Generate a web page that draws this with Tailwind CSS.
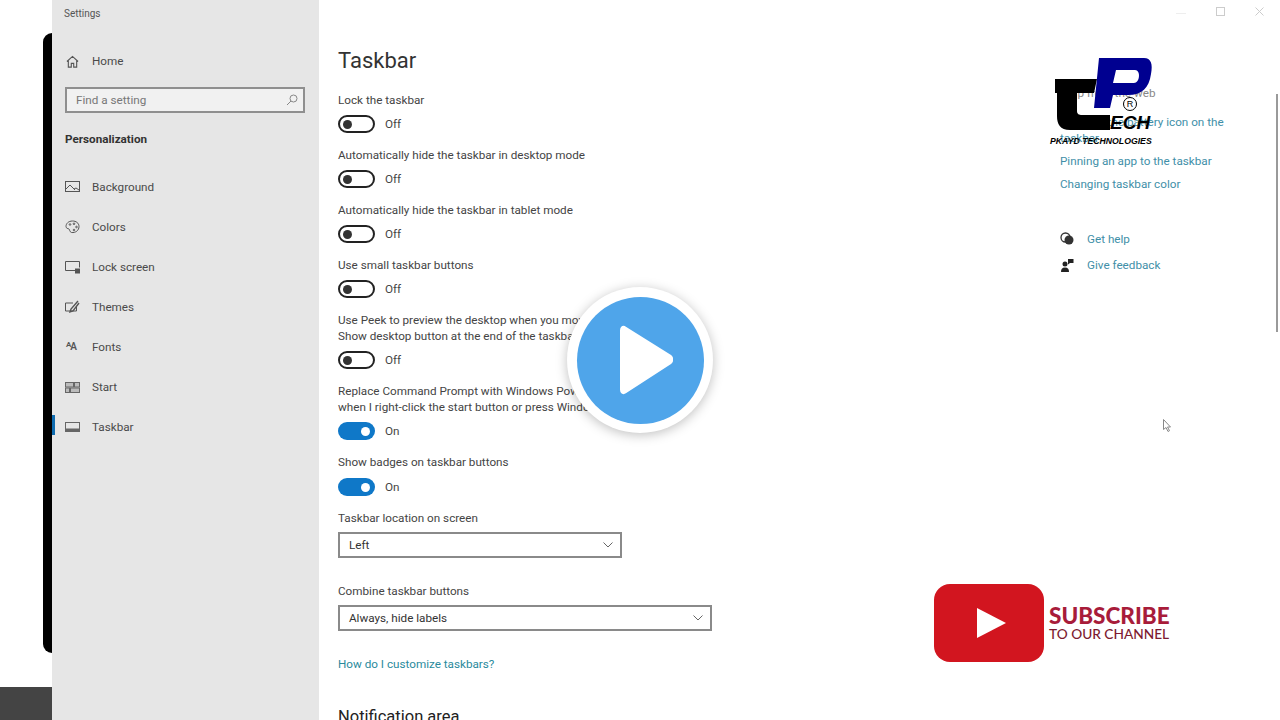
<!DOCTYPE html>
<html lang="en">
<head>
    <meta charset="UTF-8">
    <title>Settings - Taskbar</title>
    <script src="https://cdn.jsdelivr.net/npm/@tailwindcss/browser@4"></script>
</head>
<body class="bg-white">
<div class="relative w-[1280px] h-[720px] overflow-hidden flex font-['Roboto',sans-serif] text-[11.7px] leading-[16px] text-[#444]">

    <!-- Left edge: phone frame and dark block -->
    <div class="w-[52px] shrink-0 flex flex-col items-end bg-white">
        <div class="mt-[33px] w-[9px] h-[620px] bg-black rounded-l-[9px]"></div>
        <div class="mt-[34px] w-full flex-1 bg-[#444]"></div>
    </div>

    <!-- Sidebar -->
    <aside class="w-[267px] shrink-0 bg-[#e6e6e6] flex flex-col text-[#4a4a4a]">
        <div class="pl-[12px] pt-[6px] text-[10px] text-[#555]">Settings</div>
        <div class="pl-[14px] mt-[31px] h-[16px] flex items-center">
            <svg class="w-[13px] h-[13px]" viewBox="0 0 14 14" fill="none" stroke="#555" stroke-width="1.2"><path d="M1 7 7 1.5 13 7M2.5 6v7h3.2V9h2.600v4h3.200V6"/></svg>
            <span class="ml-[13px]">Home</span>
        </div>
        <div class="ml-[13px] mt-[18px] w-[240px] h-[26px] border-2 border-[#8f8f8f] bg-[#f1f1f1] flex items-center justify-between pl-[9px] pr-[5px] text-[#777]">
            <span>Find a setting</span>
            <svg class="w-[12px] h-[12px]" viewBox="0 0 12 12" fill="none" stroke="#888" stroke-width="1"><circle cx="7.5" cy="4.5" r="3.5"/><path d="M5 7 1 11"/></svg>
        </div>
        <div class="ml-[13px] mt-[18px] font-bold text-[#333]">Personalization</div>

        <nav class="mt-[32px] flex flex-col gap-[24px]">
            <div class="h-[16px] flex items-center pl-[13px]">
                <svg class="w-[15px] h-[12px]" viewBox="0 0 15 12" fill="none" stroke="#555"><rect x=".5" y=".5" width="14" height="10"/><path d="m1 8 4-4 5 5M9 8l2-1 3 2"/></svg>
                <span class="ml-[12px]">Background</span>
            </div>
            <div class="h-[16px] flex items-center pl-[13px]">
                <svg class="w-[15px] h-[14px]" viewBox="0 0 15 14" fill="none" stroke="#555"><path d="M7.5 1C3.5 1 1 3.5 1 6.5c0 2 2 2 3 2.500s0 2.500 2.500 3.500c4 .5 7.500-2 7.500-6C14 3 11 1 7.500 1Z"/><circle cx="5" cy="4.500" r=".8"/><circle cx="9" cy="3.800" r=".8"/><circle cx="11.500" cy="7" r=".8"/><circle cx="9" cy="10" r=".8"/></svg>
                <span class="ml-[12px]">Colors</span>
            </div>
            <div class="h-[16px] flex items-center pl-[13px]">
                <svg class="w-[15px] h-[13px]" viewBox="0 0 15 13" fill="none" stroke="#555"><path d="M10 9.500H.5V.5h14v6"/><rect x="10.500" y="8" width="4" height="4" fill="#555"/></svg>
                <span class="ml-[12px]">Lock screen</span>
            </div>
            <div class="h-[16px] flex items-center pl-[13px]">
                <svg class="w-[15px] h-[14px]" viewBox="0 0 15 14" fill="none" stroke="#555"><path d="M8 3H.5v8h11V6"/><path d="M13 1 6 9l-1 3 3-1 6-8" stroke-width="1.400"/></svg>
                <span class="ml-[12px]">Themes</span>
            </div>
            <div class="h-[16px] flex items-center pl-[14px]">
                <span class="w-[14px] text-[#555] font-semibold leading-none tracking-[-1px]"><span class="text-[8px] align-[3px]">A</span><span class="text-[10px]">A</span></span>
                <span class="ml-[12px]">Fonts</span>
            </div>
            <div class="h-[16px] flex items-center pl-[13px]">
                <svg class="w-[15px] h-[11px]" viewBox="0 0 15 11" fill="#bbb" stroke="#666"><rect x=".5" y=".5" width="8" height="4.500"/><rect x="9.500" y=".5" width="5" height="4.500"/><rect x=".5" y="6" width="4" height="4.500"/><rect x="5.500" y="6" width="9" height="4.500"/></svg>
                <span class="ml-[12px]">Start</span>
            </div>
            <div class="relative h-[16px] flex items-center pl-[13px]">
                <div class="absolute left-0 top-[-4px] w-[3px] h-[20px] bg-[#0f6cb0]"></div>
                <svg class="w-[15px] h-[10px]" viewBox="0 0 15 10" fill="none" stroke="#666"><rect x=".5" y=".5" width="14" height="9"/><rect x="1" y="6.500" width="13" height="2.500" fill="#666" stroke="none"/></svg>
                <span class="ml-[12px]">Taskbar</span>
            </div>
        </nav>
    </aside>

    <!-- Main settings column -->
    <main class="w-[700px] shrink-0 pl-[19px] flex flex-col">
        <h1 class="mt-[47px] h-[28px] shrink-0 text-[22px] leading-[28px] text-[#333]">Taskbar</h1>

        <div class="mt-[17px]">Lock the taskbar</div>
        <div class="mt-[7px] mb-[14px] flex items-center h-[18px]">
            <div class="w-[37px] h-[18px] rounded-full border-2 border-[#222] flex items-center pl-[3px]"><div class="w-[9px] h-[9px] rounded-full bg-[#333]"></div></div>
            <span class="ml-[10px]">Off</span>
        </div>

        <div>Automatically hide the taskbar in desktop mode</div>
        <div class="mt-[7px] mb-[14px] flex items-center h-[18px]">
            <div class="w-[37px] h-[18px] rounded-full border-2 border-[#222] flex items-center pl-[3px]"><div class="w-[9px] h-[9px] rounded-full bg-[#333]"></div></div>
            <span class="ml-[10px]">Off</span>
        </div>

        <div>Automatically hide the taskbar in tablet mode</div>
        <div class="mt-[7px] mb-[14px] flex items-center h-[18px]">
            <div class="w-[37px] h-[18px] rounded-full border-2 border-[#222] flex items-center pl-[3px]"><div class="w-[9px] h-[9px] rounded-full bg-[#333]"></div></div>
            <span class="ml-[10px]">Off</span>
        </div>

        <div>Use small taskbar buttons</div>
        <div class="mt-[7px] mb-[14px] flex items-center h-[18px]">
            <div class="w-[37px] h-[18px] rounded-full border-2 border-[#222] flex items-center pl-[3px]"><div class="w-[9px] h-[9px] rounded-full bg-[#333]"></div></div>
            <span class="ml-[10px]">Off</span>
        </div>

        <div>Use Peek to preview the desktop when you move your mouse to the<br>Show desktop button at the end of the taskbar</div>
        <div class="mt-[7px] mb-[14px] flex items-center h-[18px]">
            <div class="w-[37px] h-[18px] rounded-full border-2 border-[#222] flex items-center pl-[3px]"><div class="w-[9px] h-[9px] rounded-full bg-[#333]"></div></div>
            <span class="ml-[10px]">Off</span>
        </div>

        <div>Replace Command Prompt with Windows PowerShell in the menu<br>when I right-click the start button or press Windows key+X</div>
        <div class="mt-[7px] mb-[14px] flex items-center h-[18px]">
            <div class="w-[37px] h-[18px] rounded-full bg-[#0f78c8] flex items-center justify-end pr-[5px]"><div class="w-[9px] h-[9px] rounded-full bg-white"></div></div>
            <span class="ml-[10px]">On</span>
        </div>

        <div>Show badges on taskbar buttons</div>
        <div class="mt-[8px] mb-[14px] flex items-center h-[18px]">
            <div class="w-[37px] h-[18px] rounded-full bg-[#0f78c8] flex items-center justify-end pr-[5px]"><div class="w-[9px] h-[9px] rounded-full bg-white"></div></div>
            <span class="ml-[10px]">On</span>
        </div>

        <div>Taskbar location on screen</div>
        <div class="mt-[6px] w-[284px] h-[26px] shrink-0 border-2 border-[#8a8a8a] flex items-center justify-between pl-[9px] pr-[7px] text-[#333]">
            <span>Left</span>
            <svg class="w-[10px] h-[6px]" viewBox="0 0 10 6" fill="none" stroke="#666"><path d="m.5.5 4.500 4.500L9.500.5"/></svg>
        </div>

        <div class="mt-[25px]">Combine taskbar buttons</div>
        <div class="mt-[6px] w-[374px] h-[26px] shrink-0 border-2 border-[#8a8a8a] flex items-center justify-between pl-[9px] pr-[7px] text-[#333]">
            <span>Always, hide labels</span>
            <svg class="w-[10px] h-[6px]" viewBox="0 0 10 6" fill="none" stroke="#666"><path d="m.5.5 4.500 4.500L9.500.5"/></svg>
        </div>

        <div class="mt-[25px] text-[#2a8a9c]">How do I customize taskbars?</div>
        <h2 class="mt-[35px] shrink-0 text-[16.500px] leading-[20px] text-[#222]">Notification area</h2>
    </main>

    <!-- Right help column -->
    <section class="flex-1 relative pl-[41px] flex flex-col text-[#3f8fa8]">
        <div class="flex justify-end gap-[30px] pr-[16px] pt-[7px] h-[20px]">
            <div class="mt-[6px] w-[10px] h-px bg-[#eee]"></div>
            <div class="w-[9px] h-[9px] border border-[#ccc]"></div>
            <svg class="w-[9px] h-[9px]" viewBox="0 0 9 9" stroke="#ccc"><path d="m.5.5 8 8m0-8-8 8"/></svg>
        </div>
        <div class="mt-[65px] text-[#888]">Help from the web</div>
        <div class="mt-[13px] w-[175px]">Showing the battery icon on the taskbar</div>
        <div class="mt-[7px]">Pinning an app to the taskbar</div>
        <div class="mt-[7px]">Changing taskbar color</div>
        <div class="mt-[39px] flex items-center h-[16px]">
            <svg class="w-[14px] h-[14px]" viewBox="0 0 14 14"><circle cx="5.500" cy="5.500" r="4.500" fill="none" stroke="#333" stroke-width="1.300"/><circle cx="9" cy="8" r="4.500" fill="#333"/></svg>
            <span class="ml-[13px]">Get help</span>
        </div>
        <div class="mt-[10px] flex items-center h-[16px]">
            <svg class="w-[14px] h-[14px]" viewBox="0 0 14 14" fill="#222"><circle cx="5" cy="6" r="2.500"/><path d="M1 14c0-3 1-4.500 4-4.500S9 11 9 14Z"/><path d="M8 1h5.500v4H10L8 6.500Z"/></svg>
            <span class="ml-[13px]">Give feedback</span>
        </div>
        <div class="absolute right-[2px] top-[94px] w-[2px] h-[238px] bg-[#9a9a9a]"></div>
    </section>

    <!-- TP Tech logo overlay -->
    <div class="absolute left-[1050px] top-[56px] w-[104px] h-[92px]">
        <svg class="absolute inset-0" width="104" height="78" viewBox="0 0 104 78">
            <path d="M5 23H47L44 37H27V55C27 58 29 59 32 59H60V74H20C10 74 7 68 7 60V37H5Z" fill="#000"/>
            <path d="M49 2H94C101 2 103 8 101 18C99 32 92 39 78 39H63L60 52H44ZM66 14 63 27H84C90 27 91 14 85 14Z" fill="#000090" fill-rule="evenodd"/>
        </svg>
        <span class="absolute left-[73px] top-[41px] w-[14px] h-[14px] rounded-full border border-black text-black text-[9px] leading-[12px] text-center font-['Liberation_Sans',sans-serif]">R</span>
        <span class="absolute left-[60px] top-[58px] text-[19px] leading-[18px] font-bold italic text-black font-['Liberation_Sans',sans-serif]">ECH</span>
        <span class="absolute left-0 top-[79px] text-[8.700px] leading-[12px] font-bold italic text-black whitespace-nowrap font-['Liberation_Sans',sans-serif]">PKAYD TECHNOLOGIES</span>
    </div>

    <!-- Video play button overlay -->
    <div class="absolute left-[567px] top-[287px] w-[146px] h-[146px] rounded-full bg-white shadow-[0_2px_12px_rgba(0,0,0,0.25)] flex items-center justify-center">
        <div class="w-[127px] h-[127px] rounded-full bg-[#4fa5ea] flex items-center justify-center">
            <svg class="w-[53px] h-[70px] ml-[12px]" viewBox="0 0 54 70" fill="#fff"><path d="M0 5C0 1 3-1 6 1l46 29c3 2 3 7 0 9L6 69c-3 2-6 0-6-4Z"/></svg>
        </div>
    </div>

    <!-- Subscribe badge overlay -->
    <div class="absolute left-[934px] top-[584px] flex items-center">
        <div class="w-[110px] h-[78px] rounded-[16px] bg-[#d2151f] flex items-center justify-center">
            <svg class="w-[29px] h-[30px] ml-[5px]" viewBox="0 0 29 30" fill="#fff"><path d="M0 0 29 15 0 30Z"/></svg>
        </div>
        <div class="ml-[5px] flex flex-col font-['Lato',sans-serif] text-[#a81c3a]">
            <span class="text-[22.500px] leading-[21px] font-black">SUBSCRIBE</span>
            <span class="text-[13.700px] leading-[15px] font-medium text-[#7d1a30]">TO OUR CHANNEL</span>
        </div>
    </div>

    <!-- Mouse cursor -->
    <svg class="absolute left-[1163px] top-[419px] w-[8px] h-[13px]" viewBox="0 0 8 13" fill="#fff" stroke="#888"><path d="M.5.5v10l2.500-2 2 4 1.500-.8-2-3.700h3Z"/></svg>
</div>
</body>
</html>
